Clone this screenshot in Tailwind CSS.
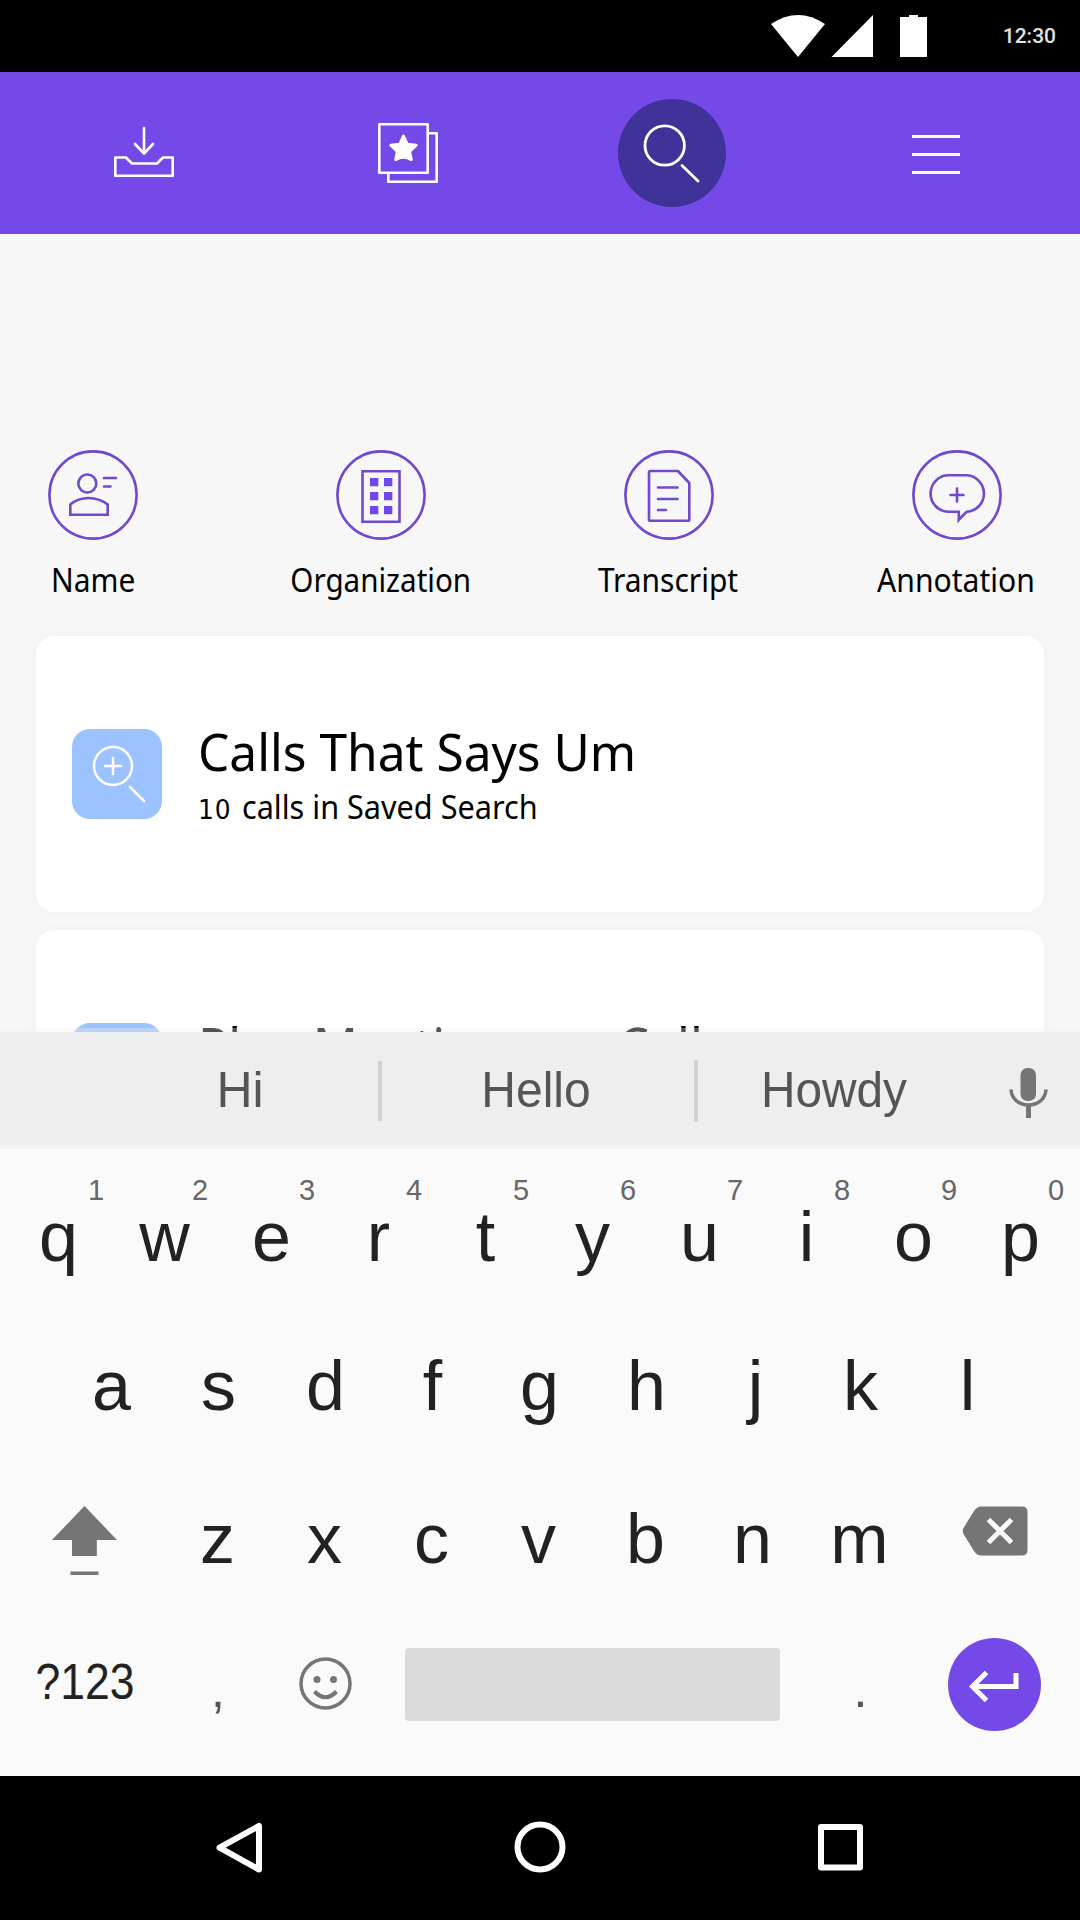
<!DOCTYPE html>
<html lang="en">
<head>
<meta charset="utf-8">
<title>Search</title>
<script src="https://cdn.jsdelivr.net/npm/@tailwindcss/browser@4"></script>
</head>
<body class="bg-[#f7f7f7]">
<div class="flex h-[1920px] w-[1080px] flex-col overflow-hidden bg-[#f7f7f7] font-['Noto_Sans',sans-serif] text-black">

  <!-- Status bar -->
  <div class="flex h-[72px] shrink-0 items-center justify-end bg-black pr-[24px]">
    <svg class="mr-[75px] h-[72px] w-[157px]" viewBox="771 0 157 72" fill="#fff">
      <path d="M771 24Q798 6 825 24L798 57Z"/>
      <path d="M831.500 57L873 15V57Z"/>
      <path d="M900 17h9v-2h9v2h9v40h-27z"/>
    </svg>
    <span class="font-['Roboto',sans-serif] text-[21px] leading-[72px] font-medium text-[#e0e0e0]">12:30</span>
  </div>

  <!-- Header tabs -->
  <div class="grid h-[162px] shrink-0 grid-cols-4 items-center bg-[#7549e8] px-[12px]">
    <svg class="h-[60px] w-[64px] justify-self-center" viewBox="112 123 64 60" fill="none" stroke="#fff" stroke-width="2.6" stroke-linejoin="round" stroke-linecap="round">
      <path d="M144 128V153M135 144l9 9.500l9-9.500M115.300 157.500H126L132 163.500H157L163 157.500H172.700V175.700H115.300Z"/>
    </svg>
    <svg class="h-[64px] w-[64px] justify-self-center" viewBox="376 121 64 64" fill="none" stroke="#fff" stroke-width="2.600" stroke-linejoin="round">
      <path d="M379.300 124.300H427.700V172.700H379.300Z"/>
      <path d="M429 133.300H436.700V181.700H388.300V174"/>
      <path fill="#fff" stroke-width="3" d="M403.500 136l3.700 8.200l9 1l-6.600 6.200l1.700 8.200q-7.800-4.600-15.600 0l1.700-8.200l-6.600-6.200l9-1z"/>
    </svg>
    <div class="flex size-[108px] items-center justify-center justify-self-center rounded-full bg-[#3f3298]">
      <svg class="size-[108px]" viewBox="618 99 108 108" fill="none" stroke="#fff" stroke-width="2.800" stroke-linecap="round">
        <circle cx="664.700" cy="145.500" r="19.700"/><path d="M682 165.500L698 181"/>
      </svg>
    </div>
    <svg class="h-[48px] w-[48px] justify-self-center" viewBox="912 129 48 48" stroke="#fff" stroke-width="3"><path d="M912 136.500h48M912 154.500h48M912 172.500h48"/></svg>
  </div>

  <!-- Search results -->
  <div class="h-[798px] shrink-0 overflow-hidden pt-[216px]">
    <div class="flex gap-[102px]">
      <div class="flex w-[186px] flex-col items-center gap-[20px]">
        <svg class="size-[90px]" viewBox="48 450 90 90" fill="none" stroke="#7049cf" stroke-width="2.600" stroke-linecap="round">
          <circle cx="93" cy="495" r="43.600"/>
          <circle cx="87.300" cy="483.500" r="9"/>
          <path d="M70.300 514.800V504.500Q78 498 88.500 498T107.700 504.500V514.800Z"/>
          <path d="M104 478h12M104 486.500h6.500"/>
        </svg>
        <span class="scale-x-[0.935] text-[32px] leading-[40px] whitespace-nowrap">Name</span>
      </div>
      <div class="flex w-[186px] flex-col items-center gap-[20px]">
        <svg class="size-[90px]" viewBox="336 450 90 90" fill="none" stroke="#7049cf" stroke-width="2.600">
          <circle cx="381" cy="495" r="43.600"/>
          <path d="M362.500 471.300H399.500V521.700H362.500Z"/>
          <path fill="#7048e8" stroke="none" d="M370 478h8.300v8.300h-8.300zM384 478h8.300v8.300h-8.300zM370 492h8.300v8.300h-8.300zM384 492h8.300v8.300h-8.300zM370 506h8.300v8.300h-8.300zM384 506h8.300v8.300h-8.300z"/>
        </svg>
        <span class="scale-x-[0.925] text-[32px] leading-[40px] whitespace-nowrap">Organization</span>
      </div>
      <div class="flex w-[186px] flex-col items-center gap-[20px]">
        <svg class="size-[90px]" viewBox="624 450 90 90" fill="none" stroke="#7049cf" stroke-width="2.600" stroke-linecap="round" stroke-linejoin="round">
          <circle cx="669" cy="495" r="43.600"/>
          <path d="M650.500 471H678L689.300 483V519.500Q689.300 520.800 688 520.800H650.500Q649 520.800 649 519.500V472.300Q649 471 650.500 471Z"/>
          <path d="M658 487.500h19.500M658 499h19.500M658 510h8"/>
        </svg>
        <span class="scale-x-[0.935] pr-[2px] text-[32px] leading-[40px] whitespace-nowrap">Transcript</span>
      </div>
      <div class="flex w-[186px] flex-col items-center gap-[20px]">
        <svg class="size-[90px]" viewBox="912 450 90 90" fill="none" stroke="#7049cf" stroke-width="2.600" stroke-linecap="round">
          <circle cx="957" cy="495" r="43.600"/>
          <path d="M947.500 475.300H967A18.300 18.300 0 0 1 967 511.800Q965.500 512.500 958.800 520V511.800H947.500A18.300 18.300 0 0 1 947.500 475.300Z"/>
          <path d="M957 488.500v13M950.500 495h13"/>
        </svg>
        <span class="scale-x-[0.94] pr-[3px] text-[32px] leading-[40px] whitespace-nowrap">Annotation</span>
      </div>
    </div>

    <div class="mt-[36px] flex flex-col gap-[18px] px-[36px]">
      <div class="flex h-[276px] items-center gap-[36px] rounded-[18px] bg-white pl-[36px] shadow-[0_0_12px_rgba(0,0,0,0.03)]">
        <div class="size-[90px] shrink-0 rounded-[18px] bg-[#9cc2ff]">
          <svg class="size-[90px]" viewBox="72 729 90 90" fill="none" stroke="#fff" stroke-width="2.500" stroke-linecap="round">
            <circle cx="113" cy="766" r="19"/><path d="M113 758v16M105 766h16M130 787L144 801"/>
          </svg>
        </div>
        <div class="flex flex-col gap-[8px] pt-[2px]">
          <div class="origin-left scale-x-[0.973] text-[51px] leading-[56px] whitespace-nowrap">Calls That Says Um</div>
          <div class="origin-left scale-x-[0.957] text-[32px] leading-[40px] whitespace-nowrap"><span class="mr-[2.500px] font-['DejaVu_Sans'] text-[26px] leading-none tracking-[1px]">10</span> calls in Saved Search</div>
        </div>
      </div>
      <div class="flex h-[276px] shrink-0 items-center gap-[36px] rounded-[18px] bg-white pl-[36px] shadow-[0_0_12px_rgba(0,0,0,0.03)]">
        <div class="size-[90px] shrink-0 rounded-[18px] bg-[#9cc2ff]"></div>
        <div class="flex flex-col gap-[8px] pt-[2px]">
          <div class="origin-left scale-x-[0.978] text-[51px] leading-[56px] whitespace-nowrap">Plan Meetings on Calls</div>
          <div class="h-[40px]"></div>
        </div>
      </div>
    </div>
  </div>

  <!-- Keyboard -->
  <div class="relative flex h-[744px] shrink-0 flex-col bg-[#fafafa] font-['Liberation_Sans',Arial,sans-serif] text-[#222]">
    <div class="absolute -top-[4px] left-0 h-[4px] w-full bg-[#f0f0f0]/35"></div>
    <div class="flex h-[117px] shrink-0 items-center border-b-4 border-[#f2f2f2] bg-[#eeeeee] pl-[101px] text-[50px] leading-[56px] text-[#555]">
      <div class="w-[277px] pt-[3px] pl-[1px] text-center">Hi</div>
      <div class="mt-[5px] h-[60px] w-[4px] bg-[#d2d2d2]"></div>
      <div class="w-[312px] pt-[3px] pr-[4px] text-center"><div class="scale-x-96">Hello</div></div>
      <div class="mt-[4px] h-[62px] w-[4px] bg-[#d2d2d2]"></div>
      <div class="w-[274px] pt-[3px] pr-[2px] text-center"><div class="scale-x-[0.955]">Howdy</div></div>
      <svg class="mt-[6px] h-[60px] w-[108px]" viewBox="972 1062 108 60" fill="none" stroke="#757575" stroke-width="3.500">
        <rect x="1020.500" y="1068" width="15.500" height="33" rx="7" fill="#757575" stroke="none"/>
        <path d="M1011 1089.500C1012 1110 1045 1110 1046 1089.500"/><path d="M1028.500 1105V1118" stroke-width="5"/>
      </svg>
    </div>

    <div class="flex pt-[26px] pl-[4px] text-center text-[70px] leading-[64px]">
      <div class="w-[107px] shrink-0 pl-[2px]"><div class="pl-[75px] text-[29px] leading-[30px] text-[#666]">1</div>q</div>
      <div class="w-[107px] shrink-0"><div class="pl-[71px] text-[29px] leading-[30px] text-[#666]">2</div>w</div>
      <div class="w-[107px] shrink-0"><div class="pl-[71px] text-[29px] leading-[30px] text-[#666]">3</div>e</div>
      <div class="w-[107px] shrink-0"><div class="pl-[71px] text-[29px] leading-[30px] text-[#666]">4</div>r</div>
      <div class="w-[107px] shrink-0"><div class="pl-[71px] text-[29px] leading-[30px] text-[#666]">5</div>t</div>
      <div class="w-[107px] shrink-0"><div class="pl-[71px] text-[29px] leading-[30px] text-[#666]">6</div>y</div>
      <div class="w-[107px] shrink-0"><div class="pl-[71px] text-[29px] leading-[30px] text-[#666]">7</div>u</div>
      <div class="w-[107px] shrink-0"><div class="pl-[71px] text-[29px] leading-[30px] text-[#666]">8</div>i</div>
      <div class="w-[107px] shrink-0"><div class="pl-[71px] text-[29px] leading-[30px] text-[#666]">9</div>o</div>
      <div class="w-[107px] shrink-0"><div class="pl-[71px] text-[29px] leading-[30px] text-[#666]">0</div>p</div>
    </div>

    <div class="mt-[85px] flex pl-[58px] text-center text-[70px] leading-[64px]">
      <div class="w-[107px]">a</div><div class="w-[107px]">s</div><div class="w-[107px]">d</div><div class="w-[107px]">f</div><div class="w-[107px]">g</div><div class="w-[107px]">h</div><div class="w-[107px] pl-[4px]">j</div><div class="w-[107px]">k</div><div class="w-[107px]">l</div>
    </div>

    <div class="mt-[87px] flex h-[72px] text-center text-[70px] leading-[68px]">
      <svg class="h-[72px] w-[164px]" viewBox="0 1505 164 72" fill="#757575"><path d="M84.500 1506L117 1540H96.800V1556H72V1540H52ZM70.500 1571.500h28v3.500h-28z"/></svg>
      <div class="w-[107px]">z</div><div class="w-[107px]">x</div><div class="w-[107px]">c</div><div class="w-[107px]">v</div><div class="w-[107px]">b</div><div class="w-[107px]">n</div><div class="w-[107px]">m</div>
      <svg class="h-[72px] w-[167px]" viewBox="913 1505 167 72"><path fill="#757575" d="M981 1506.500H1022Q1027.500 1506.500 1027.500 1512V1550Q1027.500 1555.500 1022 1555.500H981Q977 1555.500 974 1551L963.500 1534Q962 1531 963.500 1528L974 1511Q977 1506.500 981 1506.500Z"/><path stroke="#fafafa" stroke-width="5" d="M988.500 1519.500L1011.500 1542.500M1011.500 1519.500L988.500 1542.500"/></svg>
    </div>

    <div class="mt-[61px] flex h-[93px] items-center text-center text-[50px] leading-[60px]">
      <div class="w-[170px] pb-[6px]"><div class="scale-x-[0.89]">?123</div></div>
      <div class="w-[96px] pt-[10px] text-[#555]">,</div>
      <svg class="h-[60px] w-[120px]" viewBox="266 1654 120 60" fill="none" stroke="#757575" stroke-width="3.500">
        <circle cx="325.500" cy="1682.500" r="24.500"/>
        <path d="M314.500 1690.500Q325.500 1702 336.500 1690.500" stroke-width="4"/>
        <circle cx="317" cy="1678.500" r="3.500" fill="#757575" stroke="none"/><circle cx="333.500" cy="1678.500" r="3.500" fill="#757575" stroke="none"/>
      </svg>
      <div class="ml-[19px] h-[73px] w-[375px] rounded-[4px] bg-[#dbdbdb]"></div>
      <div class="w-[161px] pt-[10px] text-[#555]">.</div>
      <div class="ml-[7px] size-[93px] rounded-full bg-[#7549e8]">
        <svg class="size-[93px]" viewBox="948 1638 93 93" fill="none" stroke="#fff" stroke-width="5"><path d="M1016 1673V1686.500H974M986.500 1672.500L972.500 1686.500L986.500 1700.500"/></svg>
      </div>
    </div>
  </div>

  <!-- System navigation -->
  <div class="grid h-[144px] shrink-0 grid-cols-[300px_300px_300px] items-center justify-center bg-black">
    <svg class="h-[60px] w-[60px] justify-self-center" viewBox="210 1818 60 60" fill="none" stroke="#fff" stroke-width="6" stroke-linejoin="round"><path d="M259 1826V1869.500L219.500 1847.700Z"/></svg>
    <svg class="h-[60px] w-[60px] justify-self-center" viewBox="510 1818 60 60" fill="none" stroke="#fff" stroke-width="6"><circle cx="540" cy="1847" r="22.500"/></svg>
    <svg class="h-[60px] w-[60px] justify-self-center" viewBox="810 1818 60 60" fill="none" stroke="#fff" stroke-width="6" stroke-linejoin="round"><path d="M821 1827H860V1867.500H821Z"/></svg>
  </div>
</div>
</body>
</html>
